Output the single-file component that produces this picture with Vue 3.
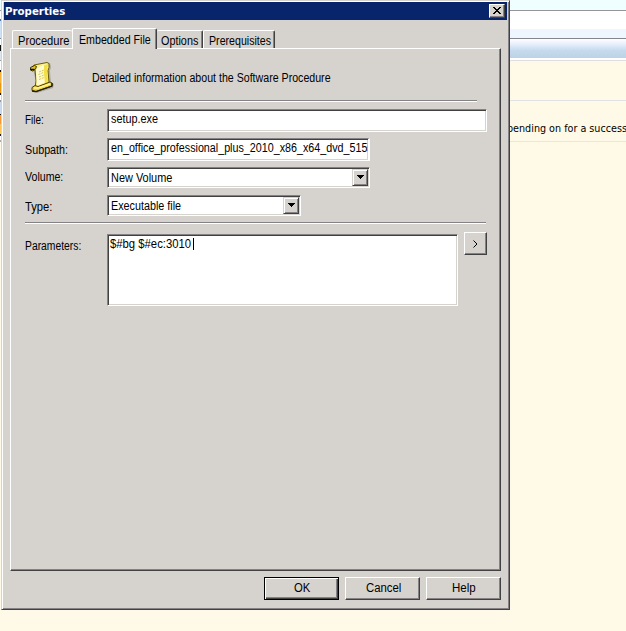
<script setup>
import { ref } from 'vue'

// Narrows or widens a line of text to the width the classic dialog font gives it.
const vFit = {
  mounted(el, { value }) {
    el.style.transform = `scaleX(${value / el.offsetWidth})`
  }
}

const tabs = [
  { name: 'Procedure', cls: 'first', w: 51 },
  { name: 'Embedded File', cls: 'active', w: 72 },
  { name: 'Options', cls: 'options', w: 37 },
  { name: 'Prerequisites', cls: 'last', w: 62 }
]
const active = ref('Embedded File')
</script>

<template>
  <div class="desktop">
    <div class="page">
      <div class="band top"></div>
      <div class="band white"></div>
      <div class="band pale"></div>
      <div class="band gradient"></div>
      <div class="band gap"></div>
      <div class="band cream"></div>
      <div class="band message"><span v-fit="132" class="t">depending on for a success</span></div>
    </div>
    <div class="strip"></div>

    <section class="dialog">
      <header class="titlebar">
        <span v-fit="60" class="t title">Properties</span>
        <button class="close" aria-label="Close">
          <svg width="8" height="7" viewBox="0 0 8 7" shape-rendering="crispEdges">
            <path d="M0 0h2v1h1v1h2v-1h1v-1h2v1h-1v1h-1v1h-1v1h1v1h1v1h1v1h-2v-1h-1v-1h-2v1h-1v1h-2v-1h1v-1h1v-1h1v-1h-1v-1h-1v-1h-1z" />
          </svg>
        </button>
      </header>

      <nav class="tabs">
        <button v-for="t in tabs" :key="t.name" class="tab" :class="t.cls" @click="active = t.name">
          <span v-fit="t.w" class="t">{{ t.name }}</span>
        </button>
      </nav>

      <main class="panel">
        <div class="intro">
          <svg class="scroll" width="26" height="34" viewBox="0 0 26 34">
            <path d="M4 8l3 0 0-2 14-4 1 4-1 4 1 12 3 1-1 4-16 5-4-1 1-4 3-2z" fill="#77756f" opacity=".45" />
            <path d="M5 4L18 1.5l2 1v4l-1 3 1 12-14 6 1-8-1-11-3-1z" fill="#fbf08a" stroke="#6d5b08" />
            <path d="M7 8l7-4 4-1-1 18-9 4z" fill="#fffbd0" />
            <path d="M15 4l4-1-1 7 1 12-3 1-1-10z" fill="#f2df48" />
            <path d="M1.500 6.500l4-2 2 1-1 2.500-3 2-2-1z" fill="#e5c51a" stroke="#3b3205" />
            <path d="M1.500 8.500h4" stroke="#141100" stroke-width="1.500" />
            <path d="M3 26.500l3-2 3 1 12-4.500 2 1v3L7 30.500l-4-1z" fill="#efd334" stroke="#4e4004" />
            <path d="M5 27l4 0 12-4" fill="none" stroke="#fff59a" stroke-width="1.500" />
            <path d="M3 30l4 .7 16-5.700v-3" fill="none" stroke="#211b00" stroke-width="1.300" />
            <path d="M10 11l5-2M9.500 13.500l5-2M10 16l5-2M10 18.500l5-2" stroke="#d2c552" stroke-dasharray="2 1" />
          </svg>
          <span v-fit="239" class="t">Detailed information about the Software Procedure</span>
        </div>
        <hr class="rule short" />

        <div class="row file">
          <label><span v-fit="19" class="t">File:</span></label>
          <div class="field"><span v-fit="47" class="t">setup.exe</span></div>
        </div>
        <div class="row subpath">
          <label><span v-fit="43" class="t">Subpath:</span></label>
          <div class="field"><span v-fit="262" class="t">en_office_professional_plus_2010_x86_x64_dvd_5155</span></div>
        </div>
        <div class="row volume">
          <label><span v-fit="38" class="t">Volume:</span></label>
          <div class="field select">
            <span v-fit="61" class="t">New Volume</span>
            <button class="drop" aria-label="Open">
              <svg width="7" height="4" viewBox="0 0 7 4" shape-rendering="crispEdges"><path d="M0 0h7v1h-1v1h-1v1h-1v1h-1v-1h-1v-1h-1v-1h-1z" /></svg>
            </button>
          </div>
        </div>
        <div class="row type">
          <label><span v-fit="27" class="t">Type:</span></label>
          <div class="field select">
            <span v-fit="70" class="t">Executable file</span>
            <button class="drop" aria-label="Open">
              <svg width="7" height="4" viewBox="0 0 7 4" shape-rendering="crispEdges"><path d="M0 0h7v1h-1v1h-1v1h-1v1h-1v-1h-1v-1h-1v-1h-1z" /></svg>
            </button>
          </div>
        </div>
        <hr class="rule" />

        <div class="row params">
          <label><span v-fit="56" class="t">Parameters:</span></label>
          <div class="field area">
            <div class="value"><span v-fit="81" class="t">$#bg $#ec:3010</span></div>
            <i class="caret"></i>
          </div>
          <button class="btn more" aria-label="Insert">
            <svg width="5" height="8" viewBox="0 0 5 8"><path d="M.5 .5L4 4 .5 7.500" fill="none" stroke="#000" /></svg>
          </button>
        </div>
      </main>

      <footer class="actions">
        <button class="btn ok"><span v-fit="16" class="t">OK</span></button>
        <button class="btn cancel"><span v-fit="35" class="t">Cancel</span></button>
        <button class="btn help"><span v-fit="24" class="t">Help</span></button>
      </footer>
    </section>
  </div>
</template>

<style>
body { margin: 0; overflow: hidden; }
</style>

<style scoped>
* { box-sizing: border-box; }
button { font: inherit; color: inherit; background: #d6d3ce; border: 0; padding: 0; margin: 0; text-align: left; border-radius: 0; }
svg { display: block; flex: none; }
.desktop {
  position: relative;
  width: 626px;
  height: 631px;
  overflow: hidden;
  background: #fffae7;
  color: #000;
  font: 12px/14px "Liberation Sans", Arial, sans-serif;
}
.t { display: inline-block; flex: none; white-space: nowrap; transform-origin: 0 0; }

.page { display: flex; flex-direction: column; }
.band { flex: none; }
.top { height: 11px; background: #effeff; border-bottom: 1px solid #949499; }
.white { height: 18px; background: #fff; }
.pale { height: 10px; background: #eef6ff; border-bottom: 1px solid #84858e; }
.gradient { height: 19px; background: linear-gradient(#fff 0%, #e4edfb 30%, #c6daee 60%, #bdd2e5 100%); }
.gap { height: 3px; background: #fff; border-bottom: 1px solid #dfdfe3; }
.cream { height: 40px; border-bottom: 1px solid #e1e2e4; }
.message {
  height: 41px;
  padding: 21px 0 0 495px;
  border-bottom: 1px solid #e6e6e4;
  overflow: hidden;
  font-family: "DejaVu Sans Condensed", "DejaVu Sans", sans-serif;
  font-size: 11px;
}
.strip {
  position: absolute;
  left: 0;
  top: 0;
  width: 1px;
  height: 142px;
  background: linear-gradient(#effeff 0 10px, #949499 10px 11px, #fff 11px 19px, #4d78b8 19px 21px, #cfe1f5 21px 38px, #84858e 38px 39px, #fff 39px 45px, #111 45px 51px, #dce5ee 51px 60px, #999 60px 61px, #fff 61px 70px, #111 70px 72px, #f7b239 72px 83px, #e99a10 83px 93px, #111 93px 95px, #fff 95px 100px, #999 100px 102px, #c8dbf0 102px 114px, #111 114px 115px, #f59a35 115px 124px, #ffc55a 124px 134px, #222 134px 136px, #fff 136px 140px, #aaa 140px);
}

.dialog {
  position: absolute;
  left: 1px;
  top: 0;
  width: 509px;
  height: 610px;
  padding: 1px 1px 0 1px;
  background: #d6d3ce;
  border: solid;
  border-width: 1px;
  border-color: #d6d3ce #424142 #424142 #d6d3ce;
  box-shadow: inset 1px 1px #fff, inset -1px -1px #848284;
}
.titlebar {
  display: flex;
  justify-content: space-between;
  width: 503px;
  height: 18px;
  margin-left: 1px;
  padding: 2px 2px 0 1px;
  background: #08246b;
  color: #fff;
}
.title { margin-top: 1px; font: bold 11px/14px "DejaVu Sans Condensed", "DejaVu Sans", sans-serif; }
.close {
  display: flex;
  justify-content: center;
  width: 16px;
  height: 14px;
  padding-top: 2px;
  border: 1px solid;
  border-color: #fff #424142 #424142 #fff;
  box-shadow: inset -1px -1px #848284;
}

.tabs { display: flex; align-items: flex-end; height: 28px; padding-left: 9px; }
.tab {
  flex: none;
  height: 18px;
  padding: 2px 0 0 5px;
  border: solid;
  border-width: 1px 1px 0 1px;
  border-color: #fff #424142 #fff #fff;
  border-radius: 2px 2px 0 0;
  box-shadow: inset -1px 0 #848284;
}
.tab.first { width: 60px; border-right: 0; box-shadow: none; }
.tab.active { position: relative; width: 85px; height: 21px; margin-bottom: -1px; padding: 2px 0 0 6px; }
.tab.options { width: 46px; padding-left: 4px; border-left: 0; }
.tab.last { width: 72px; padding-left: 5px; }

.panel {
  width: 491px;
  height: 523px;
  margin-left: 7px;
  padding-left: 14px;
  border: 1px solid;
  border-color: #fff #424142 #424142 #fff;
  box-shadow: inset -1px -1px #848284;
}
.intro { display: flex; height: 51px; padding: 12px 0 0 4px; }
.intro .t { margin: 10px 0 0 37px; }
.rule { width: 461px; height: 2px; margin: 0; border: solid; border-width: 1px 0; border-color: #848284 transparent #fff; }
.rule.short { width: 452px; }

.row { display: flex; align-items: flex-start; }
label { flex: none; width: 82px; }
.field {
  display: flex;
  flex: none;
  overflow: hidden;
  background: #fff;
  border: 1px solid;
  border-color: #848284 #fff #fff #848284;
  box-shadow: inset 1px 1px #424142, inset -1px -1px #d6d3ce;
}
.file { height: 29px; margin-top: 7px; }
.file label { padding-top: 4px; }
.file .field { width: 380px; height: 23px; padding: 2px 0 0 3px; }
.subpath { height: 29px; }
.subpath label { padding-top: 5px; }
.subpath .field { width: 263px; height: 23px; padding: 2px 0 0 3px; border-right: 2px solid #fff; }
.volume { height: 28px; }
.volume label { padding-top: 3px; }
.volume .field { width: 263px; height: 21px; }
.select { justify-content: space-between; padding: 1px 1px 0 3px; }
.select .t { margin-top: 2px; }
.type { height: 27px; }
.type label { padding-top: 5px; }
.type .field { width: 194px; height: 21px; }
.drop {
  display: flex;
  justify-content: center;
  width: 16px;
  height: 17px;
  padding-top: 5px;
  border: 1px solid;
  border-color: #d6d3ce #424142 #424142 #d6d3ce;
  box-shadow: inset 1px 1px #fff, inset -1px -1px #848284;
}
.params { margin-top: 8px; }
.params label { padding-top: 7px; }
.area { width: 351px; height: 72px; margin-top: 2px; padding: 2px 0 0 2px; }
.value { width: 83px; }
.caret { width: 1px; height: 12px; margin-top: 1px; background: #000; }

.btn {
  display: flex;
  flex: none;
  height: 23px;
  border: 1px solid;
  border-color: #fff #424142 #424142 #fff;
  box-shadow: inset -1px -1px #848284;
}
.more { width: 23px; margin-left: 6px; padding: 7px 0 0 8px; }
.actions { display: flex; gap: 6px; padding: 6px 0 0 261px; }
.actions .btn { width: 75px; padding-top: 3px; }
.actions .ok {
  padding-left: 29px;
  border-color: #000;
  box-shadow: inset 1px 1px #fff, inset -1px -1px #424142, inset -2px -2px #848284;
}
.actions .cancel { padding-left: 20px; }
.actions .help { padding-left: 25px; }
</style>
